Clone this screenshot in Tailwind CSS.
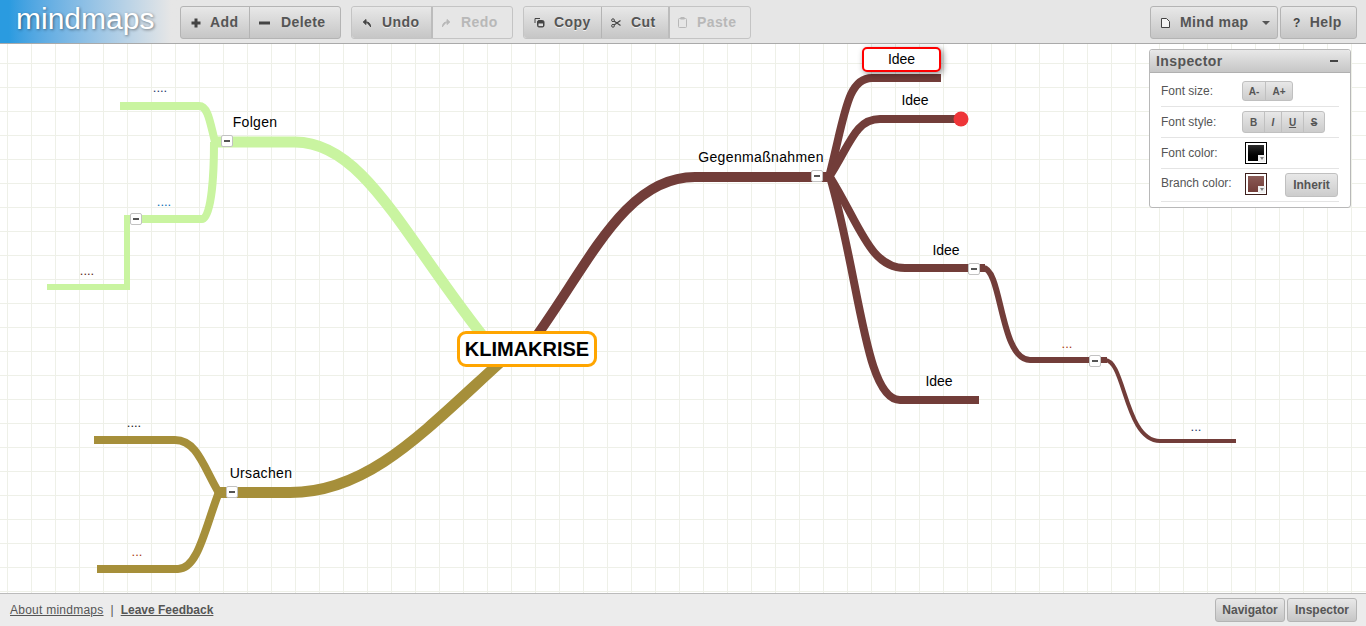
<!DOCTYPE html>
<html lang="en">
<head>
  <meta charset="UTF-8" />
  <title>mindmaps</title>
  <script src="https://cdn.jsdelivr.net/npm/@tailwindcss/browser@4"></script>
</head>
<body class="h-screen overflow-hidden flex flex-col bg-white font-['Liberation_Sans',Arial,sans-serif] text-black">

  <!-- toolbar -->
  <header class="h-[44px] shrink-0 flex items-start bg-[#e6e6e6] border-b border-[#aaaaaa]">
    <div class="w-[180px] h-[43px] flex items-start pl-[16px] bg-linear-to-r from-[#2a9be0] from-5% to-[#e6e6e6] to-95%">
      <span class="text-[30px] leading-[38px] text-white [text-shadow:1px_1px_3px_rgba(0,0,0,0.45)]">mindmaps</span>
    </div>

    <div class="flex pt-[6px] gap-[10px] text-[14px] font-bold tracking-[0.4px] whitespace-nowrap text-[#555555]">
      <div class="flex h-[33px] rounded-[3px] border border-[#b4b4b4] bg-linear-to-b from-[#e8e8e8] to-[#c6c6c6] [text-shadow:0_1px_0_#f2f2f2]">
        <button class="w-[69px] flex items-center pl-[10px] gap-[9px] border-r border-[#b4b4b4]">
          <svg class="w-[10px] h-[10px]" viewBox="0 0 10 10"><path d="M3.5 0.5h3v3h3v3h-3v3h-3v-3h-3v-3h3z" fill="#444"/></svg>Add
        </button>
        <button class="w-[90px] flex items-center pl-[9px] gap-[11px]">
          <svg class="w-[11px] h-[10px]" viewBox="0 0 11 10"><rect x="0" y="3.5" width="11" height="3" fill="#444"/></svg>Delete
        </button>
      </div>

      <div class="flex h-[33px] rounded-[3px] border border-[#c4c4c4]">
        <button class="w-[81px] flex items-center pl-[10px] gap-[10px] border-r-2 border-[#bcbcbc] rounded-l-[3px] bg-linear-to-b from-[#e8e8e8] to-[#c6c6c6] [text-shadow:0_1px_0_#f2f2f2]">
          <svg class="w-[10px] h-[10px]" viewBox="0 0 10 10"><path d="M8.5 9C8.5 5.5 7 4 4 4M4 1.5v5L1.2 4z" fill="#444" stroke="#444"/></svg>Undo
        </button>
        <button class="w-[79px] flex items-center pl-[8px] gap-[10px] text-[#b8b8b8]">
          <svg class="w-[10px] h-[10px]" viewBox="0 0 10 10"><path d="M1.5 9C1.5 5.5 3 4 6 4M6 1.5v5L8.8 4z" fill="#b8b8b8" stroke="#b8b8b8"/></svg>Redo
        </button>
      </div>

      <div class="flex h-[33px] rounded-[3px] border border-[#c4c4c4]">
        <button class="w-[78px] flex items-center pl-[10px] gap-[9px] border-r border-[#b4b4b4] rounded-l-[3px] bg-linear-to-b from-[#e8e8e8] to-[#c6c6c6] [text-shadow:0_1px_0_#f2f2f2]">
          <svg class="w-[11px] h-[11px]" viewBox="0 0 11 11"><path d="M1 6V1.5h5" fill="none" stroke="#444"/><rect x="3.5" y="3.5" width="6.5" height="6.5" rx="1.5" fill="#444" stroke="#444"/><rect x="4.5" y="6.5" width="4.5" height="2.6" fill="#ddd"/></svg>Copy
        </button>
        <button class="w-[68px] flex items-center pl-[9px] gap-[10px] border-r-2 border-[#bcbcbc] bg-linear-to-b from-[#e8e8e8] to-[#c6c6c6] [text-shadow:0_1px_0_#f2f2f2]">
          <svg class="w-[10px] h-[10px]" viewBox="0 0 10 10"><circle cx="2" cy="2.2" r="1.4" fill="none" stroke="#444"/><circle cx="2" cy="7.8" r="1.4" fill="none" stroke="#444"/><path d="M3 3l6.5 4.5M3 7L9.5 2.5" stroke="#444" stroke-width="1.2"/></svg>Cut
        </button>
        <button class="w-[80px] flex items-center pl-[8px] gap-[10px] text-[#b8b8b8]">
          <svg class="w-[9px] h-[11px]" viewBox="0 0 9 11"><rect x="0.5" y="1.5" width="8" height="9" rx="1" fill="none" stroke="#b8b8b8"/><rect x="2.5" y="0" width="4" height="2.5" fill="#b8b8b8"/></svg>Paste
        </button>
      </div>
    </div>

    <div class="ml-auto flex pt-[6px] pr-[9px] gap-[2px] text-[14px] font-bold tracking-[0.4px] whitespace-nowrap text-[#555555] [text-shadow:0_1px_0_#f2f2f2]">
      <button class="w-[128px] h-[33px] flex items-center pl-[10px] gap-[10px] rounded-[3px] border border-[#b4b4b4] bg-linear-to-b from-[#e8e8e8] to-[#c6c6c6]">
        <svg class="w-[9px] h-[10px]" viewBox="0 0 9 10"><path d="M0.5 0.5h5l3 3v6h-8z" fill="#f4f4f4" stroke="#444"/></svg>
        Mind map
        <span class="ml-[3px] w-0 h-0 border-x-[4px] border-x-transparent border-t-[4px] border-t-[#555555]"></span>
      </button>
      <button class="w-[77px] h-[33px] flex items-center pl-[12px] gap-[9px] rounded-[3px] border border-[#b4b4b4] bg-linear-to-b from-[#e8e8e8] to-[#c6c6c6]">
        <span class="text-[#444444] text-[12px]">?</span>Help
      </button>
    </div>
  </header>

  <!-- canvas -->
  <main class="relative flex-1 overflow-hidden">
    <svg class="absolute inset-0" width="1366" height="549" viewBox="0 44 1366 549" fill="none">
      <defs>
        <pattern id="grid" x="7" y="15" width="24" height="24" patternUnits="userSpaceOnUse">
          <path d="M0.5 0V24M0 0.5H24" stroke="#eef0e8" stroke-width="1"/>
        </pattern>
      </defs>
      <rect x="0" y="44" width="1366" height="549" fill="url(#grid)"/>

      <!-- Folgen -->
      <g stroke="#c9f4a0">
        <path d="M215 142 L295 142 C365 142 405 240 490 345" stroke-width="11"/>
        <path d="M120 106 L199 106 C208 106 210 122 215 142" stroke-width="8"/>
        <path d="M214 142 C214 170 212 219 202 219 L136 219" stroke-width="8"/>
        <path d="M47 287 L127 287 L127 215" stroke-width="6"/>
      </g>

      <!-- Ursachen -->
      <g stroke="#a68f3a">
        <path d="M218 492.5 L290 492.5 C370 492.5 425 430 505 358" stroke-width="11"/>
        <path d="M94 440 L175 440 C197 440 204 468 219 493" stroke-width="8"/>
        <path d="M97 569 L178 569 C198 569 205 528 219 492" stroke-width="8"/>
      </g>

      <!-- Gegenmassnahmen -->
      <g stroke="#723d39">
        <path d="M535 338 C590 262 625 177 695 177 L830 177" stroke-width="10"/>
        <path d="M829 177 C845 115 847 78 872 78 L941 78" stroke-width="8"/>
        <path d="M829 177 C850 145 855 119 880 119 L961 119" stroke-width="8"/>
        <path d="M830 177 C860 225 870 268 905 268 L985 268" stroke-width="8"/>
        <path d="M830 177 C860 280 865 400 900 400 L979 400" stroke-width="8"/>
        <path d="M983 268 C1002 268 1000 360 1030 360 L1107 360" stroke-width="6"/>
        <path d="M1105 360 C1125 360 1125 441 1160 441 L1236 441" stroke-width="4"/>
      </g>
      <circle cx="961" cy="119" r="7.5" fill="#ee3538"/>
    </svg>

    <!-- nodes -->
    <div class="absolute left-[255px] top-[69px] -translate-x-1/2 text-[14px] leading-[18px] tracking-[0.3px]">Folgen</div>
    <div class="absolute left-[261px] top-[420px] -translate-x-1/2 text-[14px] leading-[18px] tracking-[0.35px]">Ursachen</div>
    <div class="absolute left-[761px] top-[104px] -translate-x-1/2 text-[14px] leading-[18px] tracking-[0.35px]">Gegenmaßnahmen</div>
    <div class="absolute left-[915px] top-[47px] -translate-x-1/2 text-[14px] leading-[18px]">Idee</div>
    <div class="absolute left-[946px] top-[197px] -translate-x-1/2 text-[14px] leading-[18px]">Idee</div>
    <div class="absolute left-[939px] top-[328px] -translate-x-1/2 text-[14px] leading-[18px]">Idee</div>

    <div class="absolute left-[160px] top-[37px] -translate-x-1/2 text-[13px] leading-[14px] text-[#1f3a6a]">....</div>
    <div class="absolute left-[164px] top-[151px] -translate-x-1/2 text-[13px] leading-[14px] text-[#0a6fb5]">....</div>
    <div class="absolute left-[87px] top-[220px] -translate-x-1/2 text-[13px] leading-[14px] text-[#5a2a20]">....</div>
    <div class="absolute left-[134px] top-[372px] -translate-x-1/2 text-[13px] leading-[14px] text-[#222222]">....</div>
    <div class="absolute left-[137px] top-[501px] -translate-x-1/2 text-[13px] leading-[14px] text-[#a83a10]">...</div>
    <div class="absolute left-[1067px] top-[293px] -translate-x-1/2 text-[13px] leading-[14px] text-[#a83a10]">...</div>
    <div class="absolute left-[1196px] top-[376px] -translate-x-1/2 text-[13px] leading-[14px] text-[#1f3a6a]">...</div>

    <!-- selected node -->
    <div class="absolute left-[862px] top-[3px] w-[79px] h-[25px] flex items-center justify-center rounded-[5px] border-2 border-[#ff0000] bg-white text-[14px] shadow-[2px_2px_6px_rgba(0,0,0,0.45)]">Idee</div>

    <!-- root node -->
    <div class="absolute left-[457px] top-[287px] w-[140px] h-[36px] flex items-center justify-center rounded-[9px] border-[3px] border-[#ffa500] bg-white text-[20px] font-bold">KLIMAKRISE</div>

    <!-- fold toggles -->
    <button class="absolute left-[221px] top-[91px] w-[12px] h-[12px] flex items-center justify-center rounded-[2px] border border-[#c2c2c2] bg-white"><span class="w-[6px] h-[2px] bg-[#555555]"></span></button>
    <button class="absolute left-[130px] top-[169px] w-[12px] h-[12px] flex items-center justify-center rounded-[2px] border border-[#c2c2c2] bg-white"><span class="w-[6px] h-[2px] bg-[#555555]"></span></button>
    <button class="absolute left-[226px] top-[442px] w-[12px] h-[12px] flex items-center justify-center rounded-[2px] border border-[#c2c2c2] bg-white"><span class="w-[6px] h-[2px] bg-[#555555]"></span></button>
    <button class="absolute left-[811px] top-[126px] w-[12px] h-[12px] flex items-center justify-center rounded-[2px] border border-[#c2c2c2] bg-white"><span class="w-[6px] h-[2px] bg-[#555555]"></span></button>
    <button class="absolute left-[968px] top-[219px] w-[12px] h-[12px] flex items-center justify-center rounded-[2px] border border-[#c2c2c2] bg-white"><span class="w-[6px] h-[2px] bg-[#555555]"></span></button>
    <button class="absolute left-[1089px] top-[311px] w-[12px] h-[12px] flex items-center justify-center rounded-[2px] border border-[#c2c2c2] bg-white"><span class="w-[6px] h-[2px] bg-[#555555]"></span></button>

    <!-- inspector panel -->
    <aside class="absolute left-[1149px] top-[5px] w-[202px] h-[159px] rounded-[3px] border border-[#b8b8b8] bg-white text-[#555555]">
      <div class="h-[23px] flex items-center justify-between pl-[6px] pr-[12px] rounded-t-[3px] border-b border-[#b0b0b0] bg-linear-to-b from-[#e8e8e8] to-[#c6c6c6] text-[14px] font-bold tracking-[0.4px]">
        Inspector
        <span class="w-[8px] h-[2px] bg-[#444444]"></span>
      </div>
      <div class="mx-[11px] text-[12px]">
        <div class="h-[34px] flex items-center border-b border-[#e4e4e4]">
          <span class="w-[81px] mt-[3px]">Font size:</span>
          <div class="flex mt-[3px] h-[20px] rounded-[3px] border border-[#c0c0c0] bg-linear-to-b from-[#e8e8e8] to-[#cccccc] text-[10px] font-bold">
            <button class="w-[23px] border-r border-[#c0c0c0]">A-</button>
            <button class="w-[26px]">A+</button>
          </div>
        </div>
        <div class="h-[31px] flex items-center border-b border-[#e4e4e4]">
          <span class="w-[81px] -mt-[1px]">Font style:</span>
          <div class="flex h-[22px] rounded-[3px] border border-[#c0c0c0] bg-linear-to-b from-[#e8e8e8] to-[#cccccc] text-[10px] font-bold">
            <button class="w-[22px] border-r border-[#c0c0c0]">B</button>
            <button class="w-[17px] border-r border-[#c0c0c0] italic">I</button>
            <button class="w-[22px] border-r border-[#c0c0c0] underline">U</button>
            <button class="w-[20px] line-through">S</button>
          </div>
        </div>
        <div class="h-[31px] flex items-center border-b border-[#e4e4e4]">
          <span class="w-[84px]">Font color:</span>
          <div class="relative w-[22px] h-[22px] border border-black p-[2px] bg-white">
            <div class="w-full h-full bg-linear-to-b from-[#2c2c2c] to-black"></div>
            <span class="absolute right-[1px] bottom-[1px] w-[7px] h-[7px] flex items-center justify-center bg-[#f0f0f0]"><span class="w-0 h-0 border-x-[2px] border-x-transparent border-t-[3px] border-t-[#808080]"></span></span>
          </div>
        </div>
        <div class="h-[33px] flex items-center border-b border-[#e4e4e4]">
          <span class="w-[84px] -mt-[4px]">Branch color:</span>
          <div class="relative -mt-[2px] w-[22px] h-[22px] border border-[#3c1f1c] p-[2px] bg-white">
            <div class="w-full h-full bg-linear-to-b from-[#8a5a55] to-[#723d39]"></div>
            <span class="absolute right-[1px] bottom-[1px] w-[7px] h-[7px] flex items-center justify-center bg-[#f0f0f0]"><span class="w-0 h-0 border-x-[2px] border-x-transparent border-t-[3px] border-t-[#808080]"></span></span>
          </div>
          <button class="ml-[18px] w-[53px] h-[24px] rounded-[3px] border border-[#c0c0c0] bg-linear-to-b from-[#e8e8e8] to-[#cccccc] font-bold">Inherit</button>
        </div>
      </div>
    </aside>
  </main>

  <!-- footer -->
  <footer class="h-[33px] shrink-0 flex items-center pl-[10px] pr-[9px] bg-[#ececec] border-t border-[#bbbbbb] text-[12px] text-[#555555]">
    <a href="#" class="underline tracking-[0.25px]">About mindmaps</a>
    <span class="mx-[7px]">|</span>
    <a href="#" class="underline font-bold">Leave Feedback</a>
    <div class="ml-auto flex gap-[2px] font-bold">
      <button class="w-[70px] h-[24px] rounded-[3px] border border-[#b4b4b4] bg-linear-to-b from-[#e8e8e8] to-[#c6c6c6]">Navigator</button>
      <button class="w-[70px] h-[24px] rounded-[3px] border border-[#b4b4b4] bg-linear-to-b from-[#e8e8e8] to-[#c6c6c6]">Inspector</button>
    </div>
  </footer>
</body>
</html>
